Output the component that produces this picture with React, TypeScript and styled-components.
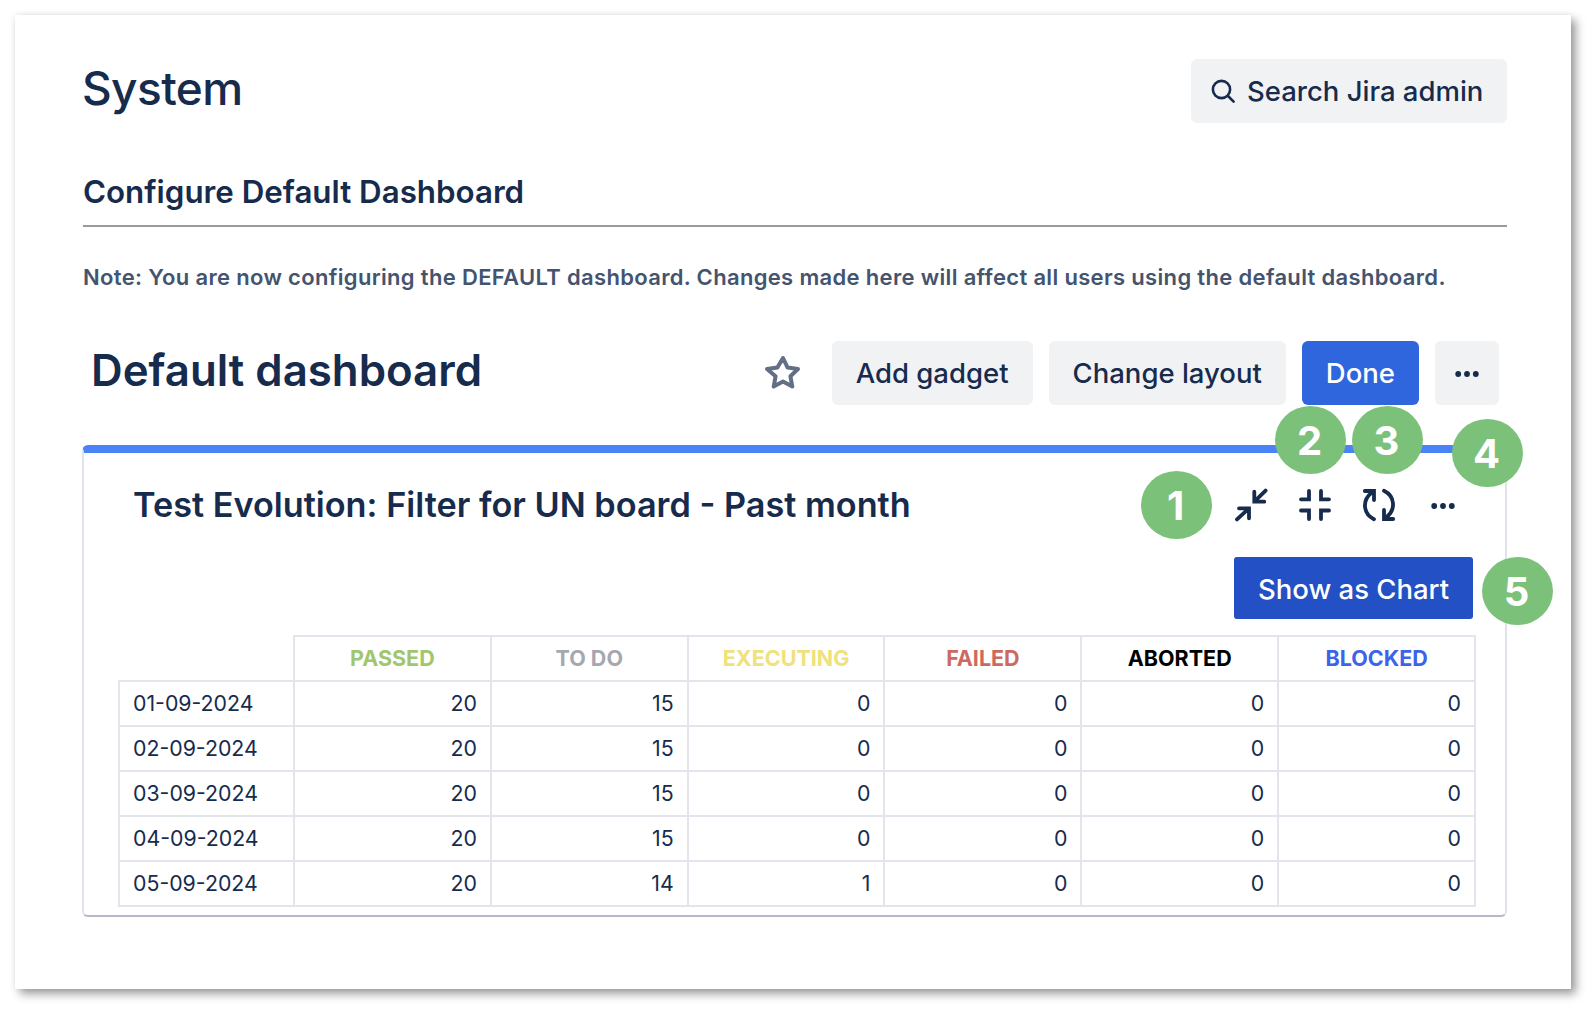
import styled, { createGlobalStyle } from 'styled-components';

const GlobalStyle = createGlobalStyle`
  html, body {
    margin: 0;
    padding: 0;
    background: #ffffff;
  }
  body {
    font-family: Inter, "Liberation Sans", sans-serif;
    color: #172b4d;
  }
`;

const rows = [
  { date: '01-09-2024', values: [20, 15, 0, 0, 0, 0] },
  { date: '02-09-2024', values: [20, 15, 0, 0, 0, 0] },
  { date: '03-09-2024', values: [20, 15, 0, 0, 0, 0] },
  { date: '04-09-2024', values: [20, 15, 0, 0, 0, 0] },
  { date: '05-09-2024', values: [20, 14, 1, 0, 0, 0] },
];

const columns = [
  { name: 'PASSED', color: '#a0c76d' },
  { name: 'TO DO', color: '#a5a7b1' },
  { name: 'EXECUTING', color: '#efe17c' },
  { name: 'FAILED', color: '#cd6a60' },
  { name: 'ABORTED', color: '#000000' },
  { name: 'BLOCKED', color: '#3c63e8' },
];

const badges = [
  { n: 1, left: 1126, top: 456 },
  { n: 2, left: 1260, top: 391 },
  { n: 3, left: 1337, top: 391 },
  { n: 4, left: 1437, top: 404 },
  { n: 5, left: 1467, top: 542 },
];

function App() {
  return (
    <>
      <GlobalStyle />
      <Page>
        <Sheet>
          <TopRow>
            <PageTitle>System</PageTitle>
            <SearchButton>
              <svg width='24' height='24' viewBox='0 0 24 24' fill='none' stroke='#172b4d' strokeWidth='2.6' strokeLinecap='round'>
                <circle cx='10.5' cy='10.5' r='8.6' />
                <path d='M17 17l5.6 5.6' />
              </svg>
              Search Jira admin
            </SearchButton>
          </TopRow>

          <SectionTitle>Configure Default Dashboard</SectionTitle>
          <Note>
            Note: You are now configuring the DEFAULT dashboard. Changes made here will affect all users using the default dashboard.
          </Note>

          <DashboardRow>
            <DashboardTitle>Default dashboard</DashboardTitle>
            <DashboardActions>
              <StarIcon width='38' height='38' viewBox='0 0 38 38' fill='none' stroke='#626f86' strokeWidth='4' strokeLinejoin='round'>
                <path d='M19 4l4.6 9.6 10.4 1.4-7.6 7.2 1.9 10.4-9.3-5-9.3 5 1.9-10.4L3 15l10.4-1.4z' />
              </StarIcon>
              <ActionButton>Add gadget</ActionButton>
              <ActionButton>Change layout</ActionButton>
              <PrimaryButton>Done</PrimaryButton>
              <MoreButton>
                <Dots />
              </MoreButton>
            </DashboardActions>
          </DashboardRow>

          <Gadget>
            <GadgetHead>
              <GadgetTitle>Test Evolution: Filter for UN board - Past month</GadgetTitle>
              <GadgetIcons>
                <GadgetIcon>
                  <path d='M19.3 2.7v10h10M19.6 12.4L30.6 1.6M4 19.3h10v10M13.7 19.6L2 30.4' />
                </GadgetIcon>
                <GadgetIcon>
                  <path d='M2 10.3h8V2M22 2v8.3h8M2 21.5h8V30M30 21.5h-8V30' />
                </GadgetIcon>
                <GadgetIcon>
                  <path d='M11 30.2C0.5 25 -1.5 12 8.5 3.8M1.8 2h9.2v9M21 1.8C31.5 7 33.5 20 23.5 28.2M30.2 30H21v-9' />
                </GadgetIcon>
                <DotsSlot>
                  <Dots />
                </DotsSlot>
              </GadgetIcons>
            </GadgetHead>

            <ChartBar>
              <ChartButton>Show as Chart</ChartButton>
            </ChartBar>

            <ResultTable>
              <colgroup>
                <col style={{ width: 175 }} />
                {columns.map((c) => (
                  <col key={c.name} />
                ))}
              </colgroup>
              <thead>
                <tr>
                  <CornerCell />
                  {columns.map((c) => (
                    <HeadCell key={c.name} $color={c.color}>
                      {c.name}
                    </HeadCell>
                  ))}
                </tr>
              </thead>
              <tbody>
                {rows.map((row) => (
                  <tr key={row.date}>
                    <DateCell>{row.date}</DateCell>
                    {row.values.map((v, i) => (
                      <NumberCell key={i}>{v}</NumberCell>
                    ))}
                  </tr>
                ))}
              </tbody>
            </ResultTable>
          </Gadget>

          {badges.map((b) => (
            <Badge key={b.n} $left={b.left} $top={b.top}>
              {b.n}
            </Badge>
          ))}
        </Sheet>
      </Page>
    </>
  );
}

function Dots() {
  return (
    <DotsIcon width='24' height='6' viewBox='0 0 24 6' fill='#172b4d'>
      <circle cx='3.2' cy='3' r='2.9' />
      <circle cx='12' cy='3' r='2.9' />
      <circle cx='20.8' cy='3' r='2.9' />
    </DotsIcon>
  );
}

function GadgetIcon({ children }: { children: React.ReactNode }) {
  return (
    <svg width='32' height='32' viewBox='0 0 32 32' fill='none' stroke='#172b4d' strokeWidth='3.8' strokeLinecap='round' strokeLinejoin='miter' overflow='visible'>
      {children}
    </svg>
  );
}

const Page = styled.div`
  box-sizing: border-box;
  height: 1014px;
  padding: 15px 25px 25px 15px;
  overflow: hidden;
`;

const Sheet = styled.div`
  position: relative;
  box-sizing: border-box;
  width: 1556px;
  height: 974px;
  padding: 44px 64px 0 68px;
  background: #ffffff;
  box-shadow: 5px 5px 9px rgba(0, 0, 0, 0.38), 0 0 6px rgba(0, 0, 0, 0.08);
`;

const TopRow = styled.div`
  display: flex;
  justify-content: space-between;
  align-items: center;
  height: 64px;
`;

const PageTitle = styled.h1`
  margin: 0 0 6px -1px;
  font-size: 46px;
  font-weight: 550;
  line-height: 58px;
  letter-spacing: -0.6px;
`;

const SearchButton = styled.button`
  display: flex;
  align-items: center;
  gap: 12px;
  box-sizing: border-box;
  width: 316px;
  height: 64px;
  padding: 0 0 0 20px;
  border: 0;
  border-radius: 6px;
  background: #f1f2f4;
  color: #172b4d;
  font: 550 27.5px Inter, "Liberation Sans", sans-serif;
`;

const SectionTitle = styled.h2`
  margin: 49px 0 0;
  padding: 0 0 13px 0;
  border-bottom: 2px solid #9a9a9a;
  font-size: 31.3px;
  font-weight: 600;
  line-height: 40px;
`;

const Note = styled.p`
  margin: 36px 0 0 0;
  color: #44546f;
  font-size: 22px;
  font-weight: 600;
  line-height: 28px;
  letter-spacing: 0.33px;
  white-space: nowrap;
`;

const DashboardRow = styled.div`
  display: flex;
  justify-content: space-between;
  align-items: center;
  height: 64px;
  margin-top: 50px;
  padding-right: 8px;
`;

const DashboardTitle = styled.h1`
  margin: 0 0 4px 8px;
  font-size: 43.8px;
  font-weight: 600;
  line-height: 58px;
`;

const DashboardActions = styled.div`
  display: flex;
  align-items: center;
  gap: 16px;
`;

const StarIcon = styled.svg`
  margin-right: 14px;
`;

const ActionButton = styled.button`
  height: 64px;
  padding: 0 24px;
  border: 0;
  border-radius: 6px;
  background: #f1f2f4;
  color: #172b4d;
  font: 550 27.5px Inter, "Liberation Sans", sans-serif;
`;

const PrimaryButton = styled(ActionButton)`
  background: #2f66de;
  color: #ffffff;
`;

const MoreButton = styled(ActionButton)`
  display: flex;
  align-items: center;
  justify-content: center;
  width: 64px;
  padding: 0;
`;

const DotsIcon = styled.svg`
  margin-top: 2px;
`;

const Gadget = styled.section`
  box-sizing: border-box;
  height: 472px;
  margin: 40px 0 0 -1px;
  border: 2px solid #e2e3ea;
  border-top: 8px solid #4a83f8;
  border-bottom: 2px solid #b5b9c8;
  border-radius: 6px;
  background: #ffffff;
`;

const GadgetHead = styled.div`
  display: flex;
  justify-content: space-between;
  align-items: center;
  height: 104px;
  padding: 0 46px 0 49px;
`;

const GadgetTitle = styled.h2`
  margin: 0;
  font-size: 34.25px;
  font-weight: 600;
  line-height: 44px;
`;

const GadgetIcons = styled.div`
  display: flex;
  align-items: center;
  gap: 32px;
`;

const DotsSlot = styled.div`
  display: flex;
  align-items: center;
  justify-content: center;
  width: 32px;
  height: 32px;
`;

const ChartBar = styled.div`
  display: flex;
  justify-content: flex-end;
  padding-right: 32px;
`;

const ChartButton = styled.button`
  width: 239px;
  height: 62px;
  padding: 2px 0 0;
  border: 0;
  border-radius: 3px;
  background: #2350c4;
  color: #ffffff;
  font: 550 27.5px Inter, "Liberation Sans", sans-serif;
`;

const ResultTable = styled.table`
  width: 1358px;
  margin: 16px 0 0 34px;
  border-collapse: collapse;
  table-layout: fixed;
  font-size: 21.3px;
`;

const CornerCell = styled.th`
  border: 0;
`;

const HeadCell = styled.th<{ $color: string }>`
  box-sizing: border-box;
  height: 45px;
  padding: 0 0 2px;
  border: 2px solid #e4e5ec;
  color: ${(p) => p.$color};
  font-size: 21.5px;
  font-weight: 700;
  text-align: center;
`;

const DateCell = styled.td`
  box-sizing: border-box;
  height: 45px;
  padding: 0 13px 2px;
  border: 2px solid #e4e5ec;
  white-space: nowrap;
`;

const NumberCell = styled(DateCell)`
  text-align: right;
`;

const Badge = styled.div<{ $left: number; $top: number }>`
  position: absolute;
  left: ${(p) => p.$left}px;
  top: ${(p) => p.$top}px;
  display: flex;
  align-items: center;
  justify-content: center;
  box-sizing: border-box;
  width: 71px;
  height: 68px;
  padding-right: 2px;
  border-radius: 50%;
  background: #7cc17a;
  color: #ffffff;
  font-size: 40px;
  font-weight: 700;
`;

export default App;
